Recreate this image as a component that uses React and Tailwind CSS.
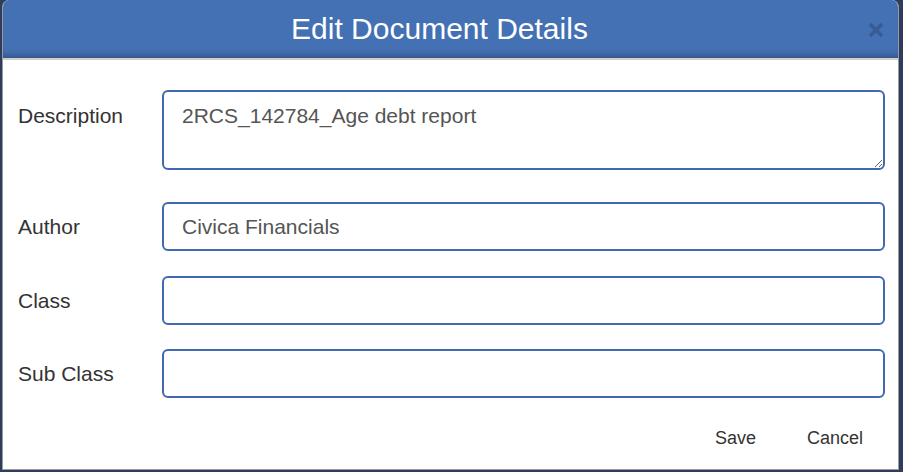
import React from "react";

export default function App() {
  const font = { fontFamily: '"Liberation Sans", Arial, sans-serif' };
  return (
    <div
      className="w-[903px] h-[472px] bg-[#2e3d5e] flex flex-col overflow-hidden"
      style={font}
    >
      <div className="ml-[2px] w-[897px] h-[470px] bg-white border-x border-b border-[#9a9a9a] rounded-t-[7px] overflow-hidden flex flex-col">
        <div className="h-[58px] shrink-0 bg-[#4470b4] shadow-[inset_0_-7px_6px_-5px_rgba(0,0,0,0.3)] flex items-center border-b-2 border-[#cfcfcf] box-content">
          <div className="flex-1 pl-[8px] text-center text-white text-[30px] leading-none">
            Edit Document Details
          </div>
          <div className="w-[16px] mr-[14px] mt-[2px] flex items-center justify-center">
            <svg width="16" height="16" viewBox="0 0 16 16">
              <path
                d="M2 2 L14 14 M14 2 L2 14"
                stroke="#385b92"
                strokeWidth="3.6"
                strokeLinecap="butt"
              />
            </svg>
          </div>
        </div>

        <div className="flex-1 flex flex-col pt-[30px] pl-[15px] pr-[13px] text-[21px] text-[#333]">
          <div className="flex">
            <div className="w-[144px] pt-[14px] leading-[24px]">Description</div>
            <textarea
              className="flex-1 h-[80px] border-2 border-[#4169b0] rounded-[6px] px-[18px] py-[12px] leading-[24px] text-[#555] outline-none"
              style={font}
              defaultValue="2RCS_142784_Age debt report"
            />
          </div>

          <div className="flex items-center mt-[32px]">
            <div className="w-[144px] leading-[24px]">Author</div>
            <input
              className="flex-1 h-[49px] border-2 border-[#4169b0] rounded-[6px] px-[18px] text-[#555] outline-none"
              style={font}
              defaultValue="Civica Financials"
            />
          </div>

          <div className="flex items-center mt-[25px]">
            <div className="w-[144px] leading-[24px]">Class</div>
            <input
              className="flex-1 h-[49px] border-2 border-[#4169b0] rounded-[6px] px-[18px] text-[#555] outline-none"
              style={font}
              defaultValue=""
            />
          </div>

          <div className="flex items-center mt-[24px]">
            <div className="w-[144px] leading-[24px]">Sub Class</div>
            <input
              className="flex-1 h-[49px] border-2 border-[#4169b0] rounded-[6px] px-[18px] text-[#555] outline-none"
              style={font}
              defaultValue=""
            />
          </div>

          <div className="flex justify-end items-center mt-[29px] pr-[22px] text-[18px] leading-[22px] text-[#333] gap-[51px]">
            <button style={font}>Save</button>
            <button style={font}>Cancel</button>
          </div>
        </div>
      </div>
    </div>
  );
}
